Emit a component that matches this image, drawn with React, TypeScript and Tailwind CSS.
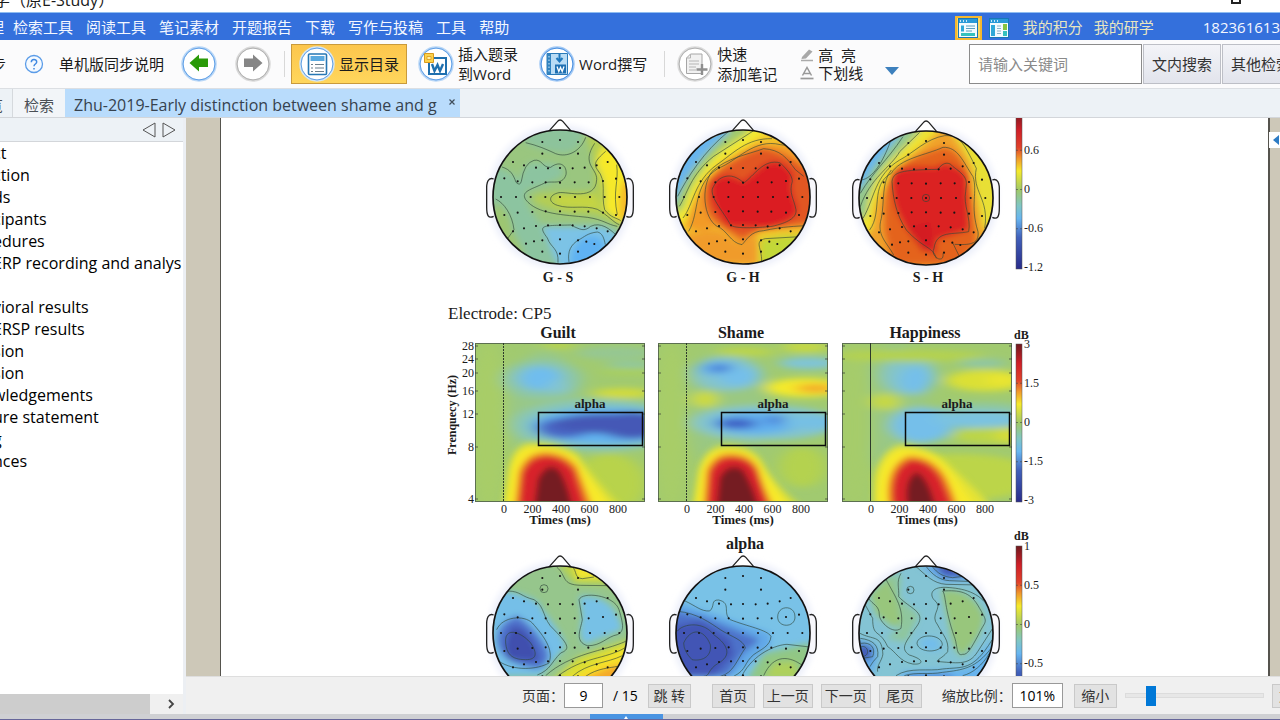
import type { ReactNode } from "react";

type Blob = { d: string; c: string };
type HeadProps = {
  cx: number;
  cy: number;
  origin: [number, number];
  base: string;
  blobs: Blob[];
  lines: string[];
  id: string;
};

const electrodes: [number, number][] = [
  [-53, -165], [0, -171], [54, -165], [-53, -130], [54, -130],
  [-141, -105], [-108, -95], [-72, -88], [-36, -86], [0, -87], [38, -86], [74, -88], [110, -95], [143, -105],
  [-167, -56], [-127, -47], [-83, -44], [-43, -44], [0, -43], [44, -44], [86, -44], [129, -48], [168, -55],
  [-177, 0], [-132, 0], [-88, 0], [-44, 0], [0, 0], [45, 0], [90, 0], [134, 0], [178, 0],
  [-167, 54], [-127, 47], [-83, 45], [-43, 43], [0, 43], [44, 44], [85, 44], [129, 47], [168, 54],
  [-141, 103], [-108, 94], [-72, 87], [-36, 85], [0, 84], [38, 85], [74, 88], [110, 94], [143, 103],
  [-102, 140], [-78, 133], [-53, 130], [0, 127], [54, 130], [79, 134], [103, 141],
  [-53, 164], [0, 170], [54, 164],
];

function Head({ cx, cy, origin, base, blobs, lines, id }: HeadProps) {
  return (
    <g transform={`translate(${cx} ${cy}) scale(0.33333)`}>
      <circle r="216" fill="#eceffa" filter="url(#soft)" />
      <path d="M-34-197 L-8-226 Q0-236 9-226 L34-197" fill="#fff" stroke="#222" strokeWidth="4" />
      <path d="M-199-54 C-215-60-221-45-220-20 V30 C-220 55-215 66-199 58" fill="#f7f7fc" stroke="#222" strokeWidth="4" />
      <path d="M199-54 C215-60 221-45 220-20 V30 C220 55 215 66 199 58" fill="#f7f7fc" stroke="#222" strokeWidth="4" />
      <clipPath id={id}>
        <circle r="200" />
      </clipPath>
      <g clipPath={`url(#${id})`}>
        <circle r="204" fill={base} />
        <g transform={`translate(${-origin[0]} ${-origin[1]})`}>
          <g filter="url(#soft)">
            {blobs.map((b, i) => (
              <path key={i} d={b.d} fill={b.c} />
            ))}
          </g>
          <g fill="none" stroke="#2f4538" strokeOpacity="0.75" strokeWidth="2.5">
            {lines.map((d, i) => (
              <path key={i} d={d} />
            ))}
          </g>
        </g>
      </g>
      {electrodes.map(([x, y], i) => (
        <circle key={i} cx={x} cy={y} r="3.2" fill="#151515" />
      ))}
      <circle r="201" fill="none" stroke="#111" strokeWidth="5" />
    </g>
  );
}

const heads: HeadProps[] = [
  {
    id: "gs", cx: 560, cy: 197, origin: [268, 247], base: "#9ac67f",
    blobs: [
      { d: "M160 30 H340 Q340 110 280 115 Q220 110 160 84Z", c: "#8dc39b" },
      { d: "M60 150 Q130 170 145 200 Q165 130 200 145 Q280 140 280 180 Q240 210 170 225 Q150 260 215 330 L265 450 H180 Q60 380 60 250Z", c: "#8cc4a0" },
      { d: "M75 260 Q120 290 125 345 L165 420 L130 420 L60 330Z", c: "#9dc672" },
      { d: "M345 60 Q380 150 370 230 L250 235 Q170 235 190 260 Q250 300 370 300 L450 330 L480 200 L400 60Z", c: "#b3cd55" },
      { d: "M250 240 H370 L400 285 L260 272Z", c: "#c5d443" },
      { d: "M395 95 L375 145 Q412 200 402 285 L460 330 L490 220 L440 110Z", c: "#f6e92a" },
      { d: "M458 200 Q440 250 450 320 L490 300 V190Z", c: "#f6b92b" },
      { d: "M215 335 H330 L400 335 L450 360 L400 470 H270Z", c: "#7cc3e6" },
      { d: "M300 450 Q295 400 340 370 Q390 350 405 400 L350 460Z", c: "#5fb2f3" },
    ],
    lines: [
      "M165 84C200 92 230 105 255 117C290 130 330 110 345 68",
      "M94 157C120 165 128 180 136 203Q148 215 152 200Q160 145 190 137C215 132 215 160 240 158C270 135 290 155 286 180C275 215 240 195 220 206C180 225 150 230 165 255C200 300 280 300 350 308C400 315 410 330 440 335",
      "M372 86C330 150 380 160 378 195C375 260 290 230 265 234C235 240 230 262 260 272C300 285 340 270 380 284C410 300 430 325 446 330",
      "M405 110C370 140 370 150 380 165C410 200 390 240 402 285C420 310 440 310 450 318",
      "M438 150C445 200 425 230 440 300",
      "M75 253C100 265 125 300 130 345L112 370",
      "M262 444C265 400 240 400 230 370C200 330 215 333 300 331C330 345 340 352 360 335C390 320 420 345 435 360",
      "M295 442C290 410 300 390 325 375C340 368 350 355 380 352C395 355 400 370 404 390",
    ],
  },
  {
    id: "gh", cx: 743, cy: 197, origin: [818, 247], base: "#f2c62c",
    blobs: [
      { d: "M600 330 L645 320 Q690 180 770 130 L900 45 L800 20 L600 100Z", c: "#f2ea30" },
      { d: "M600 310 L640 280 Q665 190 750 110 L840 50 L800 20 L600 100Z", c: "#a0c96d" },
      { d: "M600 290 L625 240 Q660 150 780 50 L760 20 L600 100Z", c: "#67b5ee" },
      { d: "M860 90 Q760 130 700 200 Q650 300 650 340 L700 350 L740 335 L815 390 L860 345 L1040 335 V170 L960 90Z", c: "#f29a28" },
      { d: "M870 100 Q780 130 710 200 Q690 290 740 325 L815 375 L870 345 L1040 325 V190 Q940 100 870 100Z", c: "#e25722" },
      { d: "M818 200 Q760 165 727 200 Q705 250 770 335 L900 340 Q995 312 980 270 Q955 220 970 180 Q930 120 880 150Z", c: "#db1f20" },
      { d: "M740 345 L810 390 L860 360 V450 H700 L640 360Z", c: "#f09b2b" },
      { d: "M870 450 V375 L940 362 H1000 L960 450Z", c: "#c3d837" },
    ],
    lines: [
      "M622 245C650 190 700 110 775 50", "M627 275C650 240 660 180 730 125L850 48",
      "M638 310C670 270 670 200 740 150C790 115 830 70 905 72", "M655 350C690 290 665 210 745 160C800 140 850 70 930 90L945 92",
      "M815 390C780 385 770 345 740 335C700 310 690 220 725 170C770 130 830 120 880 102C930 105 950 130 975 165L1000 185M815 390C830 375 840 350 880 348C940 335 980 335 1004 333",
      "M820 205C780 165 740 190 730 215C710 240 760 290 780 330C790 345 880 338 905 335C950 325 980 310 977 285C970 250 955 235 966 200C965 180 950 165 930 145C880 130 850 185 820 205Z",
      "M874 440C875 400 850 380 885 372L990 366",
    ],
  },
  {
    id: "sh", cx: 926, cy: 198, origin: [319, 249], base: "#f0a22c",
    blobs: [
      { d: "M110 390 L160 340 Q160 220 250 140 L370 40 L290 20 L100 100Z", c: "#eee331" },
      { d: "M390 50 Q470 150 465 210 L490 350 L540 300 V160 L440 50Z", c: "#e8df34" },
      { d: "M100 330 L140 300 Q150 200 210 140 L310 40 H250 L100 120Z", c: "#94c78a" },
      { d: "M100 240 L130 210 Q160 150 260 40 H200 L100 150Z", c: "#68b6ee" },
      { d: "M375 97 Q300 115 230 155 Q190 200 195 350 L220 450 H420 L470 380 L450 200 Q430 110 375 97Z", c: "#e4641f" },
      { d: "M213 172 Q250 150 350 156 Q380 125 440 180 L448 345 L350 375 L350 420 Q270 390 225 270Z", c: "#db2021" },
      { d: "M260 340 L330 320 L345 400 L310 410Z", c: "#d41f20" },
    ],
    lines: [
      "M125 195C160 190 190 140 212 80", "M122 235C160 170 200 140 250 65", "M122 275C150 190 215 155 240 110L300 52",
      "M130 310C165 250 165 180 240 135C280 115 320 70 375 62C420 60 430 80 470 160C455 230 510 250 495 340",
      "M150 345C190 290 150 210 215 175C240 130 320 120 370 97C415 95 430 140 460 185C475 230 450 270 475 350C480 390 445 390 405 388",
      "M222 420C200 380 170 360 185 310C195 260 185 200 215 165",
      "M350 430C340 395 310 400 260 345C230 300 220 250 217 200C220 170 245 165 355 163C370 140 390 140 400 155C450 190 440 200 438 230C430 270 455 310 447 350C400 360 350 345 343 400C330 425 375 450 370 415",
      "M330 249A11 11 0 1 1 308 249A11 11 0 1 1 330 249Z", "M400 385Q412 410 418 422",
    ],
  },
  {
    id: "guilt-alpha", cx: 560, cy: 633, origin: [268, 310], base: "#96c68c",
    blobs: [
      { d: "M60 180 Q200 190 215 240 Q280 320 285 350 L210 440 H60Z", c: "#74bfe8" },
      { d: "M325 200 Q430 190 455 300 L340 345 Q320 310 335 260Z", c: "#77c1e6" },
      { d: "M260 100 H480 V200 L410 165 L310 160Z", c: "#b9d24c" },
      { d: "M305 100 L320 148 L400 145 L370 90Z", c: "#f2e62d" },
      { d: "M250 450 L320 385 L480 330 V500 H250Z", c: "#d9dd35" },
      { d: "M290 450 L400 385 L480 350 V500 H290Z", c: "#f6e22a" },
      { d: "M330 450 L420 410 L480 400 V500 H330Z", c: "#f5a92a" },
      { d: "M140 258 Q75 280 80 340 Q95 405 200 417 Q250 400 225 350 Q190 290 140 258Z", c: "#4f72cc" },
      { d: "M125 290 Q90 350 115 390 L205 395 Q195 330 150 295Z", c: "#4150ae" },
    ],
    lines: [
      "M112 184C150 185 150 200 190 210C225 230 215 270 250 300C300 350 295 360 270 370C240 400 240 420 200 436",
      "M258 112C290 140 270 165 330 167L415 168", "M305 112C320 125 310 145 335 147L370 142",
      "M325 210C335 185 430 195 445 240C460 290 460 305 440 315C410 320 390 350 350 348C310 335 330 300 335 270Z",
      "M78 300C95 260 160 255 185 280C220 320 250 360 235 400C200 420 130 425 85 395",
      "M105 340C100 290 150 305 180 340C200 370 200 390 165 390C120 390 108 370 105 340Z",
      "M225 438C300 370 400 365 465 335", "M260 440C340 380 400 390 462 355", "M305 440C350 400 410 400 455 378", "M345 440C380 415 420 415 440 410",
      "M232 177A12 12 0 1 1 208 177A12 12 0 1 1 232 177Z",
    ],
  },
  {
    id: "shame-alpha", cx: 743, cy: 633, origin: [818, 310], base: "#79c2e7",
    blobs: [
      { d: "M600 210 L720 250 L900 310 L900 350 L790 440 H600Z", c: "#62a9e8" },
      { d: "M600 240 L700 262 L870 330 L820 370 L770 440 H600Z", c: "#4d72ca" },
      { d: "M600 290 L690 275 L780 330 L790 375 L730 440 H600Z", c: "#4355b5" },
      { d: "M830 450 L880 370 L1020 340 V450Z", c: "#91c785" },
      { d: "M880 450 L910 400 L970 395 L990 450Z", c: "#aed05b" },
    ],
    lines: [
      "M640 212C680 230 690 245 718 244C735 230 720 210 745 211C785 220 755 250 780 270C830 290 890 300 902 320C900 350 870 360 850 375C820 400 830 420 790 440",
      "M622 245C680 250 720 280 750 300C780 320 820 330 825 355C800 390 790 430 750 440",
      "M620 305C640 280 700 275 730 315C780 350 780 380 745 400C710 420 720 440 700 440",
      "M640 340C660 295 700 295 720 345C725 385 690 395 665 390Q640 365 640 340Z",
      "M922 262C922 225 975 225 974 262C974 295 922 295 922 262Z",
      "M815 438C850 370 920 345 950 344L1018 352", "M880 438C910 370 960 380 997 408",
    ],
  },
  {
    id: "happy-alpha", cx: 926, cy: 633, origin: [290, 324], base: "#84c4d4",
    blobs: [
      { d: "M120 210 L180 150 L205 150 L200 230 L220 300 L190 305 L140 270Z", c: "#98c681" },
      { d: "M170 150 L215 150 L210 220 L270 270 L230 350 L170 340 L215 310Z", c: "#8fc69d" },
      { d: "M125 210 L180 165 L205 230 L215 300 L180 300Z", c: "#98c67c" },
      { d: "M335 195 Q425 185 463 270 Q463 330 400 393 Q370 385 357 290Z", c: "#98c67c" },
      { d: "M270 120 H420 L440 165 L340 170Z", c: "#65a8ea" },
      { d: "M310 120 H400 L400 155 L345 155Z", c: "#4356b6" },
      { d: "M80 340 L140 360 L145 400 L130 450 L80 420Z", c: "#66aeea" },
      { d: "M85 355 L128 367 L125 405 L90 405Z", c: "#4356b6" },
      { d: "M268 355 Q280 330 325 340 L335 375 Q290 385 268 355Z", c: "#72bdec" },
      { d: "M200 470 L220 440 L420 430 L490 340 V470Z", c: "#68b4ee" },
      { d: "M225 470 L240 450 H370 V470Z", c: "#4d80d4" },
    ],
    lines: [
      "M170 163C200 220 225 250 215 310C190 330 150 290 150 270C150 240 130 240 118 220",
      "M215 145C200 170 210 190 208 215C240 250 290 260 265 300C230 350 210 370 240 390C290 405 280 420 250 417C210 410 200 380 175 365C150 310 130 340 130 280L108 240",
      "M400 388C380 395 385 360 375 335C345 250 350 210 340 198C390 195 420 200 445 240C480 300 470 280 447 330C425 370 415 390 400 388Z",
      "M480 250C450 200 400 190 350 187C300 185 300 215 320 230C340 250 300 270 325 300C340 330 360 345 355 380C340 400 310 410 330 410C390 415 420 420 445 380L490 310",
      "M260 125C290 150 310 175 350 178L450 180", "M290 124C310 150 330 165 360 167L435 170", "M308 124C325 145 340 155 370 158L410 153",
      "M263 355C265 325 335 325 339 358C335 385 267 385 263 355Z",
      "M92 325C130 345 155 330 160 380C165 400 140 420 145 440", "M93 340C130 345 150 360 145 395C130 410 125 420 122 425", "M95 355C125 350 140 370 130 395L100 400", "M96 365C115 360 125 390 100 395",
      "M200 452C240 425 300 440 340 432C400 425 430 440 488 345", "M225 452C260 440 300 450 340 442C400 435 440 430 485 370", "M400 452C430 445 460 420 480 385",
      "M254 195A11 11 0 1 1 232 195A11 11 0 1 1 254 195Z",
    ],
  },
];

type Patch = [number, number, number, number, string];
type HeatProps = { x: number; title: string; patches: Patch[]; flames: Blob[]; dashed: boolean };

const heatmaps: HeatProps[] = [
  {
    x: 475, title: "Guilt", dashed: true,
    patches: [
      [210, 200, 110, 180, "#98c888"], [40, 250, 55, 260, "#a8cd68"],
      [200, 108, 120, 58, "#8cc6aa"], [195, 105, 65, 36, "#70bdee"], [245, 130, 30, 20, "#82c4d4"],
      [250, 6, 50, 12, "#b9d34a"], [420, 30, 120, 20, "#96c792"], [460, 85, 90, 9, "#aad05a"], [470, 65, 80, 9, "#8cc6a8"],
      [440, 150, 90, 15, "#d3dc3a"],
      [370, 245, 260, 78, "#88c6b8"], [390, 247, 225, 55, "#62b3f0"],
      [265, 254, 80, 30, "#4a66c4"], [390, 240, 160, 30, "#4459b6"], [470, 246, 100, 40, "#4459b6"],
      [400, 420, 110, 90, "#b8d34c"],
    ],
    flames: [
      { d: "M82 490 L98 380 Q115 290 180 298 Q270 300 310 335 Q350 400 440 490Z", c: "#d9df38" },
      { d: "M92 490 L108 370 Q125 306 180 308 Q260 305 305 345 Q340 400 410 490Z", c: "#f7e92a" },
      { d: "M118 490 L130 385 Q150 328 210 326 Q270 328 305 370 L350 490Z", c: "#ee7a25" },
      { d: "M132 490 L142 390 Q160 338 215 336 Q265 338 295 380 L330 490Z", c: "#d8222a" },
      { d: "M175 500 L188 405 Q220 345 255 385 Q280 430 292 500Z", c: "#751a20" },
    ],
  },
  {
    x: 658, title: "Shame", dashed: true,
    patches: [
      [200, 200, 120, 180, "#9ac882"], [40, 250, 50, 260, "#a8cd68"],
      [205, 92, 105, 50, "#84c4cc"], [180, 76, 60, 22, "#66b0ec"], [240, 100, 60, 28, "#74bfea"], [185, 76, 28, 11, "#3f70d0"],
      [260, 26, 90, 13, "#bcd548"], [440, 12, 70, 16, "#c6d844"], [450, 60, 90, 18, "#7fc4d8"],
      [440, 133, 120, 28, "#f4ea2c"], [470, 135, 60, 13, "#f3a82b"], [140, 168, 40, 25, "#cdda3c"],
      [320, 238, 220, 52, "#84c5cc"], [290, 238, 130, 34, "#62b0ee"], [235, 240, 60, 16, "#3c5fc4"], [350, 230, 28, 13, "#4b80d8"],
      [470, 235, 100, 22, "#76c0e4"], [430, 370, 70, 60, "#b4d24f"],
    ],
    flames: [
      { d: "M102 490 L118 385 Q140 300 210 305 Q285 305 315 360 Q345 420 430 490Z", c: "#d9df38" },
      { d: "M110 490 L126 380 Q145 315 210 316 Q280 315 310 365 Q340 420 395 490Z", c: "#f7e92a" },
      { d: "M135 490 L144 380 Q165 330 215 330 Q275 330 300 375 Q315 430 345 490Z", c: "#ee7a25" },
      { d: "M148 490 L156 385 Q175 340 220 340 Q270 340 292 380 Q308 430 330 490Z", c: "#d8222a" },
      { d: "M174 500 L184 400 Q215 350 255 380 Q285 430 303 500Z", c: "#751a20" },
    ],
  },
  {
    x: 842, title: "Happiness", dashed: false,
    patches: [
      [160, 200, 100, 200, "#99c885"], [40, 250, 50, 260, "#a6cc6b"],
      [200, 95, 80, 58, "#84c5c8"], [220, 110, 50, 40, "#74bfea"],
      [200, 38, 230, 18, "#b4d24f"], [420, 60, 70, 14, "#8ec6a4"], [430, 112, 120, 32, "#dbe036"], [480, 110, 50, 20, "#e9e533"],
      [130, 175, 45, 25, "#c6d844"], [420, 195, 130, 18, "#8fc7a0"],
      [240, 245, 95, 52, "#74bfea"], [410, 228, 140, 26, "#7bc3e0"], [440, 276, 110, 24, "#bcd548"], [500, 276, 40, 24, "#d7dd38"],
      [350, 400, 240, 70, "#bcd548"],
    ],
    flames: [
      { d: "M95 490 Q85 330 170 305 Q265 305 325 370 Q370 410 450 490Z", c: "#e4e334" },
      { d: "M108 490 Q100 340 180 315 Q260 312 315 370 Q350 420 400 490Z", c: "#f7e92a" },
      { d: "M140 490 Q122 370 195 338 Q270 335 310 400 Q330 440 345 490Z", c: "#ee7a25" },
      { d: "M155 490 Q138 375 205 348 Q260 345 295 405 Q315 450 328 490Z", c: "#d8222a" },
      { d: "M198 500 Q180 410 220 385 Q255 390 282 500Z", c: "#751a20" },
    ],
  },
];

const yTicks: [string, number][] = [["28", 3], ["24", 16], ["20", 30], ["16", 48], ["12", 71], ["8", 104], ["4", 156]];

function Heatmap({ x, title, patches, flames, dashed }: HeatProps) {
  return (
    <g transform={`translate(${x} 343)`} textAnchor="middle">
      <svg width="170" height="159" viewBox="0 0 507 474" preserveAspectRatio="none">
        <rect width="507" height="474" fill="#a1ca70" />
        <g filter="url(#patch)">
          {patches.map(([cx, cy, rx, ry, c], i) => (
            <ellipse key={i} cx={cx} cy={cy} rx={rx} ry={ry} fill={c} />
          ))}
        </g>
        <g filter="url(#flame)">
          {flames.map((f, i) => (
            <path key={i} d={f.d} fill={f.c} />
          ))}
        </g>
      </svg>
      <rect x="0.5" y="0.5" width="169" height="158" fill="none" stroke="#5c7050" />
      <path d="M28.5 0V158" stroke="#2d3a2a" strokeDasharray={dashed ? "2 1" : undefined} />
      {yTicks.map(([t, y]) => (
        <path key={t} d={`M0 ${y}H3M167 ${y}H170`} stroke="#333" strokeWidth="0.7" />
      ))}
      <rect x="63.5" y="69.5" width="104" height="33" fill="none" stroke="#0a0a0a" strokeWidth="1.5" />
      <text x="115" y="65" className="text-[13px] font-bold">alpha</text>
      <text x="83" y="-5" className="text-[16px] font-bold">{title}</text>
      {["0", "200", "400", "600", "800"].map((t, i) => (
        <text key={t} x={29 + i * 28.5} y="170" className="text-[12px]">{t}</text>
      ))}
      <text x="85" y="181" className="text-[13px] font-bold">Times (ms)</text>
    </g>
  );
}

function ColorBar({ y, labels }: { y: number; labels: string[] }) {
  return (
    <g>
      <rect x="1016" y={y} width="6" height="158" fill="url(#bar)" stroke="#555" strokeWidth="0.5" />
      {labels.map((t, i) => (
        <g key={i}>
          {i > 0 && i < 4 && <path d={`M1016 ${y + i * 39.25}h6`} stroke="#444" strokeWidth="0.6" strokeDasharray="2 2" />}
          {t && <text x="1024" y={y + i * 39 + 4} className="text-[12px]">{t}</text>}
        </g>
      ))}
    </g>
  );
}

function Figure() {
  return (
    <svg
      width="610"
      height="558"
      viewBox="440 118 610 558"
      className="mx-auto block font-['Liberation_Serif',serif]"
      fill="#1b1b1b"
      role="img"
      aria-label="Electrode CP5"
    >
      <defs>
        <filter id="soft" x="-20%" y="-20%" width="140%" height="140%">
          <feGaussianBlur stdDeviation="9" />
        </filter>
        <filter id="patch" x="-20%" y="-20%" width="140%" height="140%">
          <feGaussianBlur stdDeviation="22 10" />
        </filter>
        <filter id="flame" x="-20%" y="-20%" width="140%" height="140%">
          <feGaussianBlur stdDeviation="9" />
        </filter>
        <linearGradient id="bar" x1="0" y1="0" x2="0" y2="1">
          <stop offset="0" stopColor="#6f1a1e" />
          <stop offset="0.12" stopColor="#cf1f28" />
          <stop offset="0.23" stopColor="#e0412a" />
          <stop offset="0.3" stopColor="#f0982c" />
          <stop offset="0.38" stopColor="#f5ea2c" />
          <stop offset="0.5" stopColor="#a0c969" />
          <stop offset="0.6" stopColor="#80c6c4" />
          <stop offset="0.68" stopColor="#68b6f0" />
          <stop offset="0.8" stopColor="#4161bb" />
          <stop offset="1" stopColor="#292c8a" />
        </linearGradient>
      </defs>
      {heads.map((h) => (
        <Head key={h.id} {...h} />
      ))}
      <g textAnchor="middle" className="text-[14px] font-bold">
        <text x="558" y="282">G - S</text>
        <text x="743" y="282">G - H</text>
        <text x="928" y="282">S - H</text>
      </g>
      <ColorBar y={111} labels={["", "0.6", "0", "-0.6", "-1.2"]} />
      <text x="448" y="319" className="text-[17px]">Electrode: CP5</text>
      {heatmaps.map((h) => (
        <Heatmap key={h.title} {...h} />
      ))}
      {yTicks.map(([t, y]) => (
        <text key={t} x="474" y={y + 347} textAnchor="end" className="text-[12px]">{t}</text>
      ))}
      <text transform="translate(456 415) rotate(-90)" textAnchor="middle" className="text-[12px] font-bold">Frenquecy (Hz)</text>
      <ColorBar y={344} labels={["3", "1.5", "0", "-1.5", "-3"]} />
      <text x="1014" y="339" className="text-[12px] font-bold">dB</text>
      <text x="745" y="549" textAnchor="middle" className="text-[16px] font-bold">alpha</text>
      <ColorBar y={546} labels={["1", "0.5", "0", "-0.5"]} />
      <text x="1014" y="540" className="text-[12px] font-bold">dB</text>
    </svg>
  );
}

function Round({ ring, glow, children }: { ring: string; glow: string; children: ReactNode }) {
  return (
    <svg viewBox="0 0 36 36" className="size-9 shrink-0" aria-hidden="true">
      <circle cx="18" cy="18" r="16.5" fill="#fff" stroke={glow} strokeWidth="2.5" />
      <circle cx="18" cy="18" r="16" fill="none" stroke={ring} strokeWidth="1" />
      {children}
    </svg>
  );
}

const menus = ["检索工具", "阅读工具", "笔记素材", "开题报告", "下载", "写作与投稿", "工具", "帮助"];
const outline = [
  "ct", "ction", "ds", "cipants", "edures", "ERP recording and analys", "", "vioral results", "ERSP results",
  "sion", "sion", "wledgements", "ure statement", "g", "nces",
];

const pagerButton =
  "flex h-6 w-[43px] shrink-0 items-center justify-center whitespace-nowrap border border-[#c9c9c9] bg-[#e2e2e2] text-[14px] text-[#333]";
const pagerButtonWide =
  "flex h-6 w-[50px] shrink-0 items-center justify-center whitespace-nowrap border border-[#c9c9c9] bg-[#e2e2e2] text-[14px] text-[#333]";
const searchButton =
  "flex h-10 w-[78px] shrink-0 items-center justify-center whitespace-nowrap border border-[#bdbfc6] bg-linear-to-b from-[#f3f4f8] to-[#e2e4ec] text-[15px] text-[#333]";

export default function App() {
  return (
    <div className="flex h-screen flex-col overflow-hidden bg-white font-['Open_Sans','Noto_Sans_CJK_SC',sans-serif] text-[15px] text-[#1a1a1a]">
      <header className="flex h-3 shrink-0 items-end justify-between overflow-hidden pb-0.5">
        <span className="-ml-1.5 whitespace-nowrap text-[16px] leading-5">学（原E-Study）</span>
        <button aria-label="还原" className="mr-[39px] mb-1.5 h-3 w-[10px] shrink-0 border-2 border-[#222]" />
      </header>

      <nav className="flex h-7 shrink-0 items-center border-t border-[#8fbcf0] bg-[#3470dc] pt-0.5 text-[#f3f7ff]">
        <a href="#manage" className="-ml-[11px]">理</a>
        <div className="ml-[9px] flex gap-[13px] whitespace-nowrap">
          {menus.map((m) => (
            <a key={m} href="#menu">{m}</a>
          ))}
        </div>
        <div className="ml-auto flex items-center whitespace-nowrap">
          <button aria-label="布局一" className="flex h-6 w-[27px] items-center justify-center border-2 border-[#f5b82e] bg-[#ffd75e]">
            <svg viewBox="0 0 20 20" className="size-5">
              <rect x="0.5" y="0.5" width="19" height="19" fill="#f3fbff" stroke="#1878b8" />
              <rect x="1" y="1" width="18" height="4" fill="#2a9ad8" />
              <path d="M2 3h1M5 3h1M8 3h1" stroke="#fff" strokeWidth="1.5" />
              <path d="M3 7.5h3v6H3z" fill="#2fa8d8" />
              <path d="M8 8h9M8 10.500h9M8 13h6" stroke="#5b9fc0" />
              <path d="M3 15h14v3H3z" fill="#35c1bd" />
            </svg>
          </button>
          <button aria-label="布局二" className="ml-[7px] flex items-center">
            <svg viewBox="0 0 20 20" className="size-5">
              <rect x="0.500" y="0.500" width="19" height="19" fill="#f3fbff" stroke="#1878b8" />
              <rect x="1" y="1" width="18" height="4" fill="#2a9ad8" />
              <path d="M2 3h1M5 3h1M8 3h1" stroke="#fff" strokeWidth="1.5" />
              <path d="M2 7h4v11H2z" fill="#2fa8d8" />
              <path d="M8 8h4M8 10.500h4M8 13h4M8 15.500h4" stroke="#8ab2c8" />
              <path d="M14 6h4v6h-4z" fill="#86c440" />
              <path d="M14 13h4v5h-4z" fill="#35c1bd" />
            </svg>
          </button>
          <a href="#points" className="ml-[14px] text-[#e8e6c0]">我的积分</a>
          <a href="#study" className="ml-[11px] text-[#e8e6c0]">我的研学</a>
          <span className="ml-[49px]">182361613</span>
        </div>
      </nav>

      <div className="flex h-[49px] shrink-0 items-center whitespace-nowrap border-b border-[#dcdfe3] bg-[#fbfbfc]">
        <button className="-ml-[9px]">步</button>
        <svg viewBox="0 0 20 20" className="ml-[18px] size-5 shrink-0" aria-hidden="true">
          <circle cx="10" cy="10" r="8.500" fill="#f5faff" stroke="#5b9ce8" strokeWidth="1.300" />
          <path d="M7.300 8.200C7.300 4.600 12.700 4.700 12.700 8C12.700 10 10 10 10 12.200M10 14v1.500" fill="none" stroke="#4089e2" strokeWidth="1.500" />
        </svg>
        <button className="ml-[15px]">单机版同步说明</button>
        <button aria-label="后退" className="ml-[17px]">
          <Round ring="#5f9fe6" glow="#b9d7f7">
            <path d="M8.500 17L18 8.500V12.500H27V21H18V25.500Z" fill="#2a9a08" />
          </Round>
        </button>
        <button aria-label="前进" className="ml-[18px]">
          <Round ring="#b0b0b0" glow="#dadada">
            <path d="M27.500 17L18 8.500V12.500H9V21H18V25.500Z" fill="#868686" />
          </Round>
        </button>
        <div className="ml-[13px] h-[26px] w-px shrink-0 bg-[#d8d8d8]" />
        <button className="ml-1.5 flex h-10 items-center gap-1 border border-[#c99a3c] bg-linear-to-b from-[#fcc64d] to-[#ffd65c] px-[7px]">
          <Round ring="#5f9fe6" glow="#d5e6f2">
            <rect x="9.500" y="8" width="18" height="20.500" rx="1" fill="#fff" stroke="#2677b4" strokeWidth="1.600" />
            <path d="M11.500 10h14v5h-14z" fill="#5aa9df" />
            <path d="M12 18.500h2M12 22h2M12 25.500h2M16 18.500h9M16 22h9M16 25.500h9" stroke="#6b7f8c" strokeWidth="1.200" />
          </Round>
          显示目录
        </button>
        <button className="ml-[11px] flex items-center gap-1 text-left leading-5">
          <Round ring="#5f9fe6" glow="#b9d7f7">
            <rect x="11" y="12" width="17" height="16" fill="#fff" stroke="#1f6fae" strokeWidth="2" />
            <path d="M14 18L16.500 25L19.500 19L22 25L25 18" fill="none" stroke="#1f6fae" strokeWidth="2.400" />
            <path d="M6.500 7.500h9v9h-9z" fill="#fbd24b" stroke="#d99a1f" />
            <path d="M9 10.500h4v3H9z" fill="#fff0a8" stroke="#d99a1f" strokeWidth="0.800" />
          </Round>
          <span>插入题录<br />到Word</span>
        </button>
        <button className="ml-[21px] flex items-center gap-1">
          <Round ring="#4a90e0" glow="#a4caf5">
            <path d="M8 7.500h20.500v21H8z" fill="#b9dcf5" stroke="#2a7ab8" />
            <path d="M8 7.500h4v21H8z" fill="#3183c0" />
            <path d="M10 10v16" stroke="#cfe8fa" strokeDasharray="1.500 2" />
            <path d="M20.500 8v7M17.500 12l3 3.500l3-3.500" fill="none" stroke="#1f78bd" strokeWidth="2" />
            <path d="M16 18.500h11v9H16z" fill="#1f70b2" />
            <path d="M18 20.500l1.800 5l1.700-4l1.700 4l1.800-5" fill="none" stroke="#fff" strokeWidth="1.300" />
          </Round>
          Word撰写
        </button>
        <div className="ml-[17px] h-[26px] w-px shrink-0 bg-[#d8d8d8]" />
        <button className="ml-3 flex items-center gap-1 text-left leading-5">
          <Round ring="#b0b0b0" glow="#dcdcdc">
            <path d="M13.500 8H25v19.500H9.500V12Z" fill="#f1f1f1" stroke="#a6a6a6" />
            <path d="M9.500 12h4V8M12 15h10M12 18h10M12 21h7M12 24h7" fill="none" stroke="#b5b5b5" />
            <path d="M25 18v11M19.500 23.500h11" stroke="#8f8f8f" strokeWidth="2.400" />
          </Round>
          <span>快速<br />添加笔记</span>
        </button>
        <div className="ml-[23px] flex flex-col leading-[18px]">
          <button className="flex items-center gap-1">
            <svg viewBox="0 0 14 14" className="size-[14px]" aria-hidden="true">
              <path d="M2 9L9 1.500L12.500 3.500L6 10.500L1.500 11Z" fill="#a8a8a8" />
              <path d="M1 12.500h12" stroke="#aaa" strokeWidth="1.500" />
            </svg>
            <span className="whitespace-pre">高  亮</span>
          </button>
          <button className="flex items-center gap-1">
            <svg viewBox="0 0 14 14" className="size-[14px]" aria-hidden="true">
              <path d="M2.500 9.500L7 1.500L11.500 9.500M4 7.500H10" fill="none" stroke="#999" strokeWidth="1.500" />
              <path d="M0.500 12.500h13" stroke="#999" strokeWidth="1.700" />
            </svg>
            下划线
          </button>
        </div>
        <button aria-label="更多标注" className="mt-[14px] ml-[22px]">
          <svg viewBox="0 0 14 8" className="h-2 w-[14px]">
            <path d="M0 0H14L7 8Z" fill="#3d80bd" />
          </svg>
        </button>
        <div className="-mr-5 ml-auto flex gap-px">
          <input
            aria-label="关键词"
            placeholder="请输入关键词"
            className="h-10 w-[173px] border border-[#8b8b8b] bg-white px-2 text-[15px] placeholder:text-[#8a8a8a]"
          />
          <button className={searchButton}>文内搜索</button>
          <button className={searchButton}>其他检索</button>
        </div>
      </div>

      <div className="flex h-[29px] shrink-0 items-stretch whitespace-nowrap border-b border-[#d3d6da] bg-[#edf2f6] text-[#4a4f55]">
        <button className="-ml-3 border-r border-[#d5d9dd] pt-1 pr-[9px]">览</button>
        <button className="bg-[#f2f5f8] px-[11px] pt-1">检索</button>
        <div className="flex items-center gap-[11px] bg-[#b9dcfc] pr-1 pl-[9px] text-[#36424e]">
          <button className="pt-1 text-[16px]">Zhu-2019-Early distinction between shame and g</button>
          <button aria-label="关闭" className="mb-0.5">
            <svg viewBox="0 0 8 8" className="size-2">
              <path d="M1.500 1.500L6.500 6.500M6.500 1.500L1.500 6.500" stroke="#3f4d5a" strokeWidth="1.200" />
            </svg>
          </button>
        </div>
      </div>

      <div className="flex min-h-0 flex-1">
        <aside className="flex w-[186px] shrink-0 flex-col overflow-hidden border-r-3 border-[#eceff3] bg-white">
          <div className="flex h-6 shrink-0 items-center justify-end gap-1.5 border-b border-[#d3d6da] bg-[#edf2f6] pr-[7px]">
            <button aria-label="上一项">
              <svg viewBox="0 0 14 16" className="h-4 w-[14px]">
                <path d="M13 1V15L1 8Z" fill="none" stroke="#555" />
              </svg>
            </button>
            <button aria-label="下一项">
              <svg viewBox="0 0 14 16" className="h-4 w-[14px]">
                <path d="M1 1V15L13 8Z" fill="none" stroke="#555" />
              </svg>
            </button>
          </div>
          <ul className="-ml-[7px] flex-1 overflow-hidden whitespace-nowrap text-[16px] leading-[22px] text-black">
            {outline.map((t, i) => (
              <li key={i} className="h-[22px]">
                {t && <a href="#section">{t}</a>}
              </li>
            ))}
          </ul>
          <div className="flex h-5 shrink-0 bg-[#f0f0f0]">
            <div className="w-[150px] bg-[#cdcdcd]" />
            <button aria-label="向右滚动" className="flex flex-1 items-center justify-center pl-2">
              <svg viewBox="0 0 8 10" className="h-[10px] w-2">
                <path d="M2 1L6 5L2 9" fill="none" stroke="#444" strokeWidth="1.800" />
              </svg>
            </button>
          </div>
        </aside>

        <div className="flex min-w-0 flex-1 flex-col">
          <main className="relative min-h-0 flex-1 overflow-hidden bg-[#cdc8b8] pr-2.5 pl-[34px]">
            <div className="h-full overflow-hidden border-r-2 border-l border-[#55534d] bg-white">
              <Figure />
            </div>
            <button aria-label="展开侧栏" className="absolute top-[14px] right-0 flex h-4 w-[11px] items-center bg-white pl-1">
              <svg viewBox="0 0 6 10" className="h-2.5 w-1.5">
                <path d="M6 0V10L0 5Z" fill="#2d7cc4" />
              </svg>
            </button>
          </main>
          <footer className="flex h-[38px] shrink-0 items-center overflow-hidden whitespace-nowrap border-t border-[#dedede] bg-[#f0f0f0] pl-[336px] text-[14px] text-[#333]">
            <label htmlFor="page">页面：</label>
            <input id="page" defaultValue="9" className="h-[25px] w-[39px] shrink-0 border border-[#999] bg-white text-center text-black" />
            <span className="ml-2.5 text-black">/ 15</span>
            <button className={`${pagerButton} ml-2.5`}>跳 转</button>
            <div className="ml-[21px] flex gap-2">
              <button className={pagerButton}>首页</button>
              <button className={pagerButtonWide}>上一页</button>
              <button className={pagerButtonWide}>下一页</button>
              <button className={pagerButton}>尾页</button>
            </div>
            <label htmlFor="scale" className="ml-5">缩放比例：</label>
            <input id="scale" defaultValue="101%" className="h-[25px] w-[51px] shrink-0 border border-[#999] bg-white text-center text-black" />
            <button className={`${pagerButton} ml-[11px]`}>缩小</button>
            <input
              type="range"
              aria-label="缩放"
              defaultValue="16"
              className="ml-2 h-[5px] w-[139px] shrink-0 appearance-none border border-[#dcdcdc] bg-[#e7e7e7] [&::-webkit-slider-thumb]:h-5 [&::-webkit-slider-thumb]:w-2.5 [&::-webkit-slider-thumb]:appearance-none [&::-webkit-slider-thumb]:bg-[#0078d7]"
            />
            <button className={`${pagerButton} ml-2`}>放大</button>
          </footer>
        </div>
      </div>

      <div className="flex h-1.5 shrink-0 justify-center border-b border-[#66669a] bg-[#cfd0d3]">
        <button aria-label="展开面板" className="mr-7 flex w-[73px] items-end justify-center bg-[#4a94e2]">
          <svg viewBox="0 0 4 3" className="h-[3px] w-1">
            <path d="M0 3L2 0L4 3Z" fill="#fff" />
          </svg>
        </button>
      </div>
    </div>
  );
}
